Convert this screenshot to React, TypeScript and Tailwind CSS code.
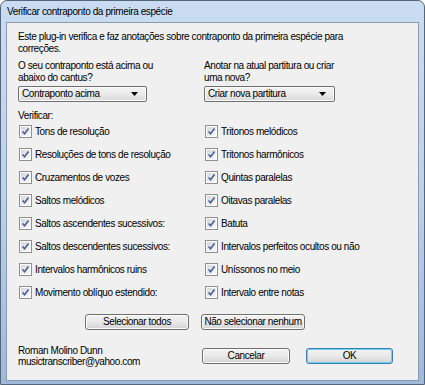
import { ReactNode } from 'react';

const left = [
  'Tons de resolução',
  'Resoluções de tons de resolução',
  'Cruzamentos de vozes',
  'Saltos melódicos',
  'Saltos ascendentes sucessivos:',
  'Saltos descendentes sucessivos:',
  'Intervalos harmônicos ruins',
  'Movimento oblíquo estendido:',
];

const right = [
  'Tritonos melódicos',
  'Tritonos harmônicos',
  'Quintas paralelas',
  'Oitavas paralelas',
  'Batuta',
  'Intervalos perfeitos ocultos ou não',
  'Uníssonos no meio',
  'Intervalo entre notas',
];

function Check({ label }: { label: string }) {
  return (
    <div className="flex items-center h-[23px] pl-px">
      <div className="w-[13px] h-[13px] border border-[#8e8f8f] bg-white p-px shrink-0">
        <div className="w-full h-full bg-gradient-to-br from-[#d3d7dc] to-[#f9f9f9] flex items-center justify-center">
          <svg width="9" height="9" viewBox="0 0 9 9">
            <path d="M1.6 4.4 L3.6 6.7 L7.5 1.5" fill="none" stroke="#4a5f97" strokeWidth="1.6" />
          </svg>
        </div>
      </div>
      <span className="ml-[3px] whitespace-nowrap">{label}</span>
    </div>
  );
}

function Combo({ text, w }: { text: string; w: string }) {
  return (
    <div className={`${w} h-[16px] border border-[#707070] rounded-[2px] bg-gradient-to-b from-[#f4f4f4] via-[#ebebeb] to-[#d9d9d9] flex items-center pl-[3px] pr-[8px] shadow-[inset_0_0_0_1px_#fbfbfb]`}>
      <span className="flex-1 whitespace-nowrap">{text}</span>
      <svg width="7" height="4" viewBox="0 0 7 4">
        <path d="M0 0 H7 L3.5 4 Z" fill="#000" />
      </svg>
    </div>
  );
}

function Btn({ children, w, primary }: { children: ReactNode; w: string; primary?: boolean }) {
  return (
    <div
      className={`${w} h-[16px] rounded-[3px] border flex items-center justify-center whitespace-nowrap bg-gradient-to-b from-[#f3f3f3] via-[#e9e9e9] to-[#d3d3d3] ${
        primary
          ? 'border-[#3c7fb1] shadow-[inset_0_0_0_1px_#6fd0f5]'
          : 'border-[#707070] shadow-[inset_0_0_0_1px_#fcfcfc]'
      }`}
    >
      {children}
    </div>
  );
}

export default function App() {
  return (
    <div
      className="w-[425px] h-[385px] rounded-t-[7px] border border-[#55667a] bg-gradient-to-b from-[#c9dcf1] via-[#bcd2ec] to-[#9fb9dc] text-black text-[10px] tracking-[-0.4px] leading-[12px] flex flex-col"
      style={{ fontFamily: '"Liberation Sans", Arial, sans-serif' }}
    >
      {/* title bar */}
      <div className="h-[21px] pl-[6px] pt-px flex items-center">Verificar contraponto da primeira espécie</div>

      {/* client area */}
      <div className="mx-[5px] h-[359px] border border-[#8b9aac] bg-[#f0f0f0] pl-[11px] pt-[8px] flex flex-col">
        <p>
          Este plug-in verifica e faz anotações sobre contraponto da primeira espécie para
          <br />
          correções.
        </p>

        <div className="grid grid-cols-[186px_1fr] mt-[5px]">
          <div>
            <p>
              O seu contraponto está acima ou
              <br />
              abaixo do cantus?
            </p>
            <div className="mt-[2px]">
              <Combo text="Contraponto acima" w="w-[129px]" />
            </div>
          </div>
          <div>
            <p>
              Anotar na atual partitura ou criar
              <br />
              uma nova?
            </p>
            <div className="mt-[2px]">
              <Combo text="Criar nova partitura" w="w-[131px]" />
            </div>
          </div>
        </div>

        <p className="mt-[8px]">Verificar:</p>

        <div className="grid grid-cols-[186px_1fr] -mt-[2px]">
          <div className="flex flex-col">
            {left.map((l) => (
              <Check key={l} label={l} />
            ))}
          </div>
          <div className="flex flex-col">
            {right.map((l) => (
              <Check key={l} label={l} />
            ))}
          </div>
        </div>

        <div className="flex gap-[12px] ml-[67px] mt-[10px]">
          <Btn w="w-[104px]">Selecionar todos</Btn>
          <Btn w="w-[104px]">Não selecionar nenhum</Btn>
        </div>

        <div className="flex items-start mt-[18px]">
          <div className="w-[184px] -mt-[3px] leading-[11px]">
            <p>Roman Molino Dunn</p>
            <p>musictranscriber@yahoo.com</p>
          </div>
          <div className="flex gap-[16px]">
            <Btn w="w-[88px]">Cancelar</Btn>
            <Btn w="w-[87px]" primary>
              OK
            </Btn>
          </div>
        </div>
      </div>
    </div>
  );
}
